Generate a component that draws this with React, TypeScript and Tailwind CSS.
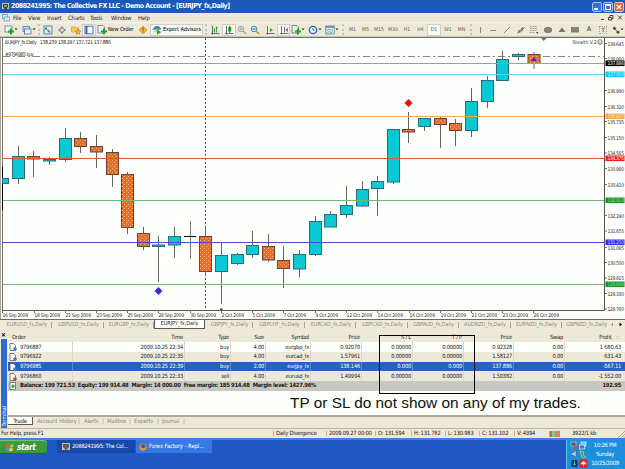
import type { ReactNode } from 'react';
import clsx from 'clsx';

type Candle = [x: number, open: number, close: number, high: number, low: number, up: boolean];

const candles: Candle[] = [
  [18.5, 156.5, 178.5, 146, 184, true],
  [33.5, 156.5, 159, 151, 177, false],
  [49.5, 159.5, 161, 157, 165, true],
  [65.5, 138.5, 159.5, 128, 162, true],
  [80.5, 138.5, 146.5, 132, 153, false],
  [96.5, 146.5, 152, 135, 168, false],
  [112.5, 152.5, 174.5, 149, 187, false],
  [127.5, 174.5, 227.5, 172, 234, false],
  [143.5, 233.5, 246.5, 227, 250, false],
  [158.5, 245, 246.5, 236, 282, true],
  [174.5, 236.5, 245, 227, 258, true],
  [205.5, 236.5, 271.5, 228, 276, false],
  [221.5, 255.5, 271.5, 243, 304, true],
  [237.5, 254.5, 263.5, 253, 265, true],
  [252.5, 245.5, 254.5, 231, 258, true],
  [268.5, 246.5, 260, 234, 262, false],
  [283.5, 260.5, 268.5, 246, 288, false],
  [299.5, 254.5, 269, 250, 277, true],
  [315.5, 221.5, 254.5, 216, 256, true],
  [330.5, 214.5, 227, 211, 227, true],
  [346.5, 205.5, 214.5, 186, 218, true],
  [362.5, 189.5, 206, 181, 207, true],
  [377.5, 181.5, 188.5, 176, 216, true],
  [393.5, 129.5, 182, 129, 184, true],
  [408.5, 129.5, 132, 112, 143, false],
  [424.5, 118.5, 126.5, 118, 131, true],
  [440.5, 118.5, 124.5, 116, 148, false],
  [455.5, 123.5, 130.5, 119, 146, false],
  [471.5, 101.5, 130.5, 88, 137, true],
  [487.5, 80.5, 101.5, 76, 108, true],
  [502.5, 59.5, 80.5, 51, 81, true],
  [518.5, 54.5, 56.5, 53, 60, true],
  [534, 54.5, 63.5, 52, 69, false],
];

const levels = [
  { y: 63.5, color: '#9a9da8', tag: '#000000', ink: '#ffffff', price: '137.886' },
  { y: 74.5, color: '#62d3f7', tag: '#10c8f8', ink: '#c8f4ff', price: '137.500' },
  { y: 116.5, color: '#f7ad54', tag: '#f8a848', ink: '#ffe2a8', price: '135.937' },
  { y: 158.5, color: '#e8582c', tag: '#f81818', ink: '#ffffff', price: '134.375' },
  { y: 200.5, color: '#72b872', tag: '#209030', ink: '#7fe07f', price: '132.813' },
  { y: 242.5, color: '#5444e4', tag: '#3030f0', ink: '#c8c8ff', price: '131.250' },
  { y: 284.5, color: '#72b872', tag: '#209030', ink: '#7fe07f', price: '129.688' },
];

const ticks: [number, string][] = [
  [43.5, '138.645'],
  [58.5, '138.060'],
  [90.5, '136.890'],
  [106.5, '136.320'],
  [121.5, '135.735'],
  [137.5, '135.150'],
  [153, '134.565'],
  [168.5, '133.980'],
  [184.5, '133.410'],
  [215.5, '132.240'],
  [231, '131.655'],
  [247.5, '131.085'],
  [262.5, '130.500'],
  [278, '129.915'],
  [293.5, '129.330'],
  [309, '128.760'],
];

const dates: [number, string][] = [
  [2, '16 Sep 2009'],
  [34, '18 Sep 2009'],
  [65, '21 Sep 2009'],
  [96, '23 Sep 2009'],
  [127, '25 Sep 2009'],
  [158, '28 Sep 2009'],
  [190, '30 Sep 2009'],
  [221, '2 Oct 2009'],
  [252, '5 Oct 2009'],
  [283, '7 Oct 2009'],
  [315, '9 Oct 2009'],
  [346, '12 Oct 2009'],
  [377, '14 Oct 2009'],
  [409, '16 Oct 2009'],
  [440, '19 Oct 2009'],
  [471, '21 Oct 2009'],
  [502, '23 Oct 2009'],
  [533, '26 Oct 2009'],
];

const Chart = () => (
  <svg className="block shrink-0" width="625" height="284" viewBox="0 36 625 284">
    <defs>
      <pattern id="bear" width="4" height="4" patternUnits="userSpaceOnUse">
        <rect width="4" height="4" fill="#e46e2e" />
        <rect x="0" y="0" width="1" height="1" fill="#f6b070" />
        <rect x="2" y="2" width="1" height="1" fill="#f6b070" />
      </pattern>
    </defs>
    <rect y="36" width="625" height="284" fill="#fcfffc" />
    <rect y="36" width="625" height="1" fill="#c9c5b6" />
    <rect y="37" width="625" height="1" fill="#77736a" />
    <rect y="38" width="1" height="282" fill="#aaa79b" />
    <path d="M2.5 38V310" stroke="#77706f" />
    <path d="M205.5 38V310" stroke="#5c5048" strokeDasharray="2 2" />
    <path d="M3 56.5H604" stroke="#8e8678" strokeDasharray="7 3 2 3" />
    {candles.map(([x, top, bottom, high, low, up]) => (
      <g key={x}>
        <path d={`M${x} ${high}V${low}`} stroke="#6e625c" />
        <rect
          x={x - 6}
          y={top}
          width="12"
          height={bottom - top}
          fill={up ? '#08c8d4' : 'url(#bear)'}
          stroke={up ? '#2a6c78' : '#754036'}
        />
      </g>
    ))}
    <path d="M2.5 167V210" stroke="#000" />
    <rect x="2.5" y="178.5" width="6" height="5" fill="#08c8d4" stroke="#2a6c78" />
    <path d="M190.5 221V259" stroke="#77706f" />
    <path d="M184 236.5H196" stroke="#000" />
    {levels.map((l) => (
      <path key={l.y} d={`M3 ${l.y}H604`} stroke={l.color} />
    ))}
    <path d="M531 61L534 57L537 61Z" fill="#3030f0" />
    <path d="M408.5 99L412.5 103L408.5 107L404.5 103Z" fill="#f80808" />
    <path d="M158.5 287L162.5 291L158.5 295L154.5 291Z" fill="#3030e8" />
    <path d="M541 38H546.5L543.7 41Z" fill="#5a72a0" />
    <rect x="220" y="308.5" width="2.5" height="2" fill="#303090" />
    <path d="M2 310.5H604.5V38" fill="none" stroke="#5e5450" />
    {dates.map(([x]) => (
      <path key={x} d={`M${x + 0.5} 310V313`} stroke="#77706f" />
    ))}
    <path d="M0 319.5H625" stroke="#6f6b60" />
    <g fontFamily="'DejaVu Sans Condensed', 'DejaVu Sans', sans-serif" fontSize="5" fill="#38302c">
      {dates.map(([x, label]) => (
        <text key={x} x={x + 0.5} y="317" textLength={label.length === 11 ? 25.5 : 22.5}>
          {label}
        </text>
      ))}
      {ticks.map(([y, label]) => (
        <g key={label}>
          <path d={`M605 ${y}H607`} stroke="#77706f" />
          <text x="607.5" y={y + 2} textLength="16.5">
            {label}
          </text>
        </g>
      ))}
      {levels.map((l) => (
        <g key={l.y}>
          <rect x="605.5" y={l.y - 3} width="19" height="5.6" fill={l.tag} />
          <text x="607.5" y={l.y + 1.6} textLength="16.5" fill={l.ink}>
            {l.price}
          </text>
        </g>
      ))}
      <text x="5" y="44" fontSize="5.3" textLength="106">
        EURJPY_fx,Daily&#160;&#160; 138.239 138.297 137.721 137.886
      </text>
      <text x="5" y="55.8" textLength="29">
        #9796985 buy
      </text>
      <text x="572.5" y="44.2" textLength="24">
        Stealth V.2
      </text>
    </g>
    <circle cx="600" cy="42" r="2.3" fill="none" stroke="#38302c" strokeWidth=".6" />
    <path d="M598.8 42.6Q600 44 601.2 42.6M599.2 41.3V41.8M600.8 41.3V41.8" fill="none" stroke="#38302c" strokeWidth=".5" />
  </svg>
);

const Svg = ({ children, w = 10 }: { children: ReactNode; w?: number }) => (
  <svg className="block shrink-0" width={w} height="10" viewBox={`0 0 ${w} 10`} fill="none">
    {children}
  </svg>
);

const Caret = () => (
  <svg className="block shrink-0" width="4" height="3" viewBox="0 0 4 3">
    <path d="M.5 .5H3.5L2 2.3Z" fill="#222" />
  </svg>
);

const Plus = () => <path d="M7 3.5V9.5M4 6.5H10" stroke="#18a828" strokeWidth="2.2" />;

const Axes = () => <path d="M2.5 1V9.5M1 8.5H9.5" stroke="#5c6068" strokeWidth=".9" />;

const Cell = ({ w, on, children }: { w: string; on?: boolean; children?: ReactNode }) => (
  <div
    className={clsx(
      'flex h-[12px] shrink-0 items-center justify-center whitespace-nowrap',
      w,
      on && 'bg-[#f8f7f1] outline-1 -outline-offset-1 outline-[#d2cebf]',
    )}
  >
    {children}
  </div>
);

const Grip = ({ w }: { w: string }) => (
  <Cell w={w}>
    <div className="h-[11px] border-l-2 border-dotted border-[#c8c4b4]" />
  </Cell>
);

const Toolbar = () => (
  <div className="flex h-[14px] shrink-0 items-center border-t border-[#f8f6ec] bg-[#ece9d8] pl-[2px]">
    <Cell w="w-[18px]">
      <Svg>
        <rect x="1" y="1" width="7" height="6" fill="#eef4f8" stroke="#6c7888" strokeWidth=".8" />
        <Plus />
      </Svg>
      <Caret />
    </Cell>
    <Cell w="w-[17px]">
      <Svg>
        <rect x="1" y="1.5" width="6.5" height="5" fill="#bcd8f4" stroke="#4878b8" strokeWidth=".8" />
        <rect x="2.5" y="4" width="6.5" height="5" fill="#e8f2fc" stroke="#4878b8" strokeWidth=".8" />
      </Svg>
      <Caret />
    </Cell>
    <Grip w="w-[4px]" />
    <Cell w="w-[14px]">
      <Svg>
        <rect x="1" y="1" width="8" height="8" fill="#d8ecfa" stroke="#3888b8" strokeWidth=".9" />
        <path d="M3 2V5M2 3.5H4" stroke="#18a828" />
        <path d="M4.5 5L7 7.5" stroke="#e05020" strokeWidth="1.6" />
      </Svg>
    </Cell>
    <Cell w="w-[14px]">
      <Svg>
        <circle cx="5" cy="5" r="2.3" stroke="#787878" />
        <path d="M5 1V3.5M5 6.5V9M1 5H3.5M6.5 5H9" stroke="#787878" />
      </Svg>
    </Cell>
    <Cell w="w-[13px]">
      <Svg>
        <path d="M.5 2H4L5 3H8V7H.5Z" fill="#f6cc58" stroke="#b89038" strokeWidth=".6" />
        <path d="M7 4L8 6H10L8.3 7.3L9 9.5L7 8.2L5 9.5L5.7 7.3L4 6H6Z" fill="#f8b020" stroke="#a87818" strokeWidth=".5" />
      </Svg>
    </Cell>
    <Cell w="w-[14px]" on>
      <Svg>
        <rect x="1" y="1.2" width="8" height="7.6" fill="#fff" stroke="#3870c0" />
        <path d="M2.5 1V9" stroke="#3870c0" strokeWidth="2" />
      </Svg>
    </Cell>
    <Cell w="w-[39px]">
      <Svg>
        <path d="M1 .5H6L7.5 2V8H1Z" fill="#f0f4f8" stroke="#687888" strokeWidth=".8" />
        <Plus />
      </Svg>
      <span className="ml-[1px] w-[26px] text-[5.6px] tracking-[-0.15px]">New Order</span>
    </Cell>
    <Cell w="w-[15px]">
      <Svg>
        <path d="M5 1L9 5L5 9L1 5Z" fill="#f8b828" stroke="#c88818" strokeWidth=".7" />
        <path d="M5 2.7V5.5M5 6.3V7.2" stroke="#704810" />
      </Svg>
    </Cell>
    <Cell w="w-[53px]" on>
      <Svg>
        <path d="M1 4Q2 1 5 1Q8 1 9 4L5 5Z" fill="#2890c8" />
        <path d="M0 4.5H9" stroke="#70b8d8" />
        <circle cx="4" cy="6" r="1.8" fill="#f0c840" />
        <path d="M5 4.5L9.5 7L5 9.7Z" fill="#20a838" />
      </Svg>
      <span className="ml-[1px] text-[5.6px] tracking-[-0.08px]">Expert Advisors</span>
    </Cell>
    <Grip w="w-[5px]" />
    <Cell w="w-[14px]">
      <Svg>
        <Axes />
        <path d="M4.5 3V7.5M6.5 1.5V7.5M6.5 3H8M3.5 6H4.5" stroke="#28a038" strokeWidth=".9" />
      </Svg>
    </Cell>
    <Cell w="w-[14px]" on>
      <Svg>
        <Axes />
        <rect x="4.2" y="2" width="3" height="4.5" fill="#18b030" />
        <path d="M5.7 .5V8" stroke="#107820" strokeWidth=".8" />
      </Svg>
    </Cell>
    <Cell w="w-[12px]">
      <Svg>
        <circle cx="4" cy="4" r="2.8" fill="#dcdcd0" stroke="#a8a89c" />
        <path d="M6 6L9 9" stroke="#a8a89c" strokeWidth="1.6" />
        <path d="M2.5 4H5.5M4 2.5V5.5" stroke="#98988c" strokeWidth=".8" />
      </Svg>
    </Cell>
    <Cell w="w-[14px]">
      <Svg>
        <circle cx="4" cy="4" r="2.8" fill="#d8ecfc" stroke="#3888d8" />
        <path d="M6 6L9 9" stroke="#d09828" strokeWidth="1.7" />
        <path d="M2.5 4H5.5" stroke="#2868b8" />
      </Svg>
    </Cell>
    <Cell w="w-[15px]">
      <Svg>
        <Axes />
        <path d="M5 3V7L8 5Z" fill="#28a038" />
      </Svg>
    </Cell>
    <Cell w="w-[13px]" on>
      <Svg>
        <Axes />
        <path d="M5.5 2V7.5" stroke="#687088" />
        <path d="M9 3V7L6.3 5Z" fill="#d04828" />
      </Svg>
    </Cell>
    <Cell w="w-[16px]">
      <Svg>
        <path d="M1 .5H6L7.5 2V8H1Z" fill="#e8ece8" stroke="#687068" strokeWidth=".8" />
        <Plus />
      </Svg>
      <Caret />
    </Cell>
    <Cell w="w-[17px]">
      <Svg>
        <circle cx="5" cy="5" r="3.6" fill="#f0f8ff" stroke="#2868c0" strokeWidth="1.4" />
        <path d="M5 3V5H7" stroke="#404858" strokeWidth=".8" />
      </Svg>
      <Caret />
    </Cell>
    <Cell w="w-[17px]">
      <Svg>
        <rect x=".8" y="1" width="8.4" height="8" fill="#e0eef4" stroke="#5880a8" strokeWidth=".8" />
        <path d="M1 2H9" stroke="#4080c8" strokeWidth="1.4" />
        <path d="M2 5L4 4L6 5.5L8 4M2 7.5L4 6.5L6 8L8 6.5" stroke="#489878" strokeWidth=".7" />
      </Svg>
      <Caret />
    </Cell>
    <Grip w="w-[6px]" />
    <div className="flex text-[5.2px] text-[#605c58]">
      <Cell w="w-[13px]">M1</Cell>
      <Cell w="w-[13px]">M5</Cell>
      <Cell w="w-[14px]">M15</Cell>
      <Cell w="w-[14px]">M30</Cell>
      <Cell w="w-[14px]">H1</Cell>
      <Cell w="w-[13px]">H4</Cell>
      <Cell w="w-[14px]" on>
        D1
      </Cell>
      <Cell w="w-[14px]">W1</Cell>
      <Cell w="w-[13px]">MN</Cell>
    </div>
    <Grip w="w-[5px]" />
    <Cell w="w-[13px]">
      <Svg>
        <path d="M5.5 2V8" stroke="#8c887c" />
      </Svg>
    </Cell>
    <Cell w="w-[14px]">
      <Svg>
        <path d="M2 5.5H8" stroke="#8c887c" />
      </Svg>
    </Cell>
    <Cell w="w-[14px]">
      <Svg>
        <path d="M2 8L8 2" stroke="#8c887c" />
      </Svg>
    </Cell>
    <Cell w="w-[13px]">
      <Svg>
        <path d="M1.5 8.5L6 3M4 7.5L8.5 2M3 5V8M6.5 2.5V5.5" stroke="#686460" />
      </Svg>
    </Cell>
    <Cell w="w-[14px]">
      <Svg>
        <path d="M1 1.5H8M1 3.5H8M1 5.5H8M1 7.5H6" stroke="#989488" strokeDasharray="1 .6" />
        <path d="M7 7H9.5L8.2 9Z" fill="#444" />
      </Svg>
    </Cell>
    <Cell w="w-[14px]">
      <Svg>
        <ellipse cx="5" cy="5" rx="3.8" ry="2.7" fill="#888478" stroke="#787468" strokeWidth=".8" />
      </Svg>
    </Cell>
    <Cell w="w-[13px]">
      <Svg>
        <path d="M5 2.5L8.5 7H1.5Z" fill="#787468" />
      </Svg>
    </Cell>
    <Cell w="w-[14px]">
      <Svg>
        <rect x="1.5" y="2.5" width="7" height="4.5" fill="#888478" stroke="#787468" strokeWidth=".8" />
      </Svg>
    </Cell>
    <Cell w="w-[14px]">
      <span className="text-[6.5px] font-bold text-[#787468]">A</span>
    </Cell>
    <Cell w="w-[14px]">
      <span className="flex h-[8px] w-[8px] items-center justify-center border border-dotted border-[#a8a498] text-[6px] font-bold text-[#787468]">
        T
      </span>
    </Cell>
    <Cell w="w-[15px]">
      <Svg w={8}>
        <path d="M.5 3.5L2.5 1.5L4.5 3.5L2.5 5ZM4 7L6 5.5L8 7L6 9Z" fill="#484440" />
        <path d="M2.5 4L6 7" stroke="#686460" />
      </Svg>
      <Caret />
    </Cell>
  </div>
);

const TitleBar = () => (
  <div className="flex h-[13px] shrink-0 items-center bg-[#1c58b8] pr-[1px] pl-[2px] text-white">
    <svg width="7" height="8" viewBox="0 0 7 8">
      <rect width="7" height="6" fill="#c8c0b0" />
      <path d="M1 1H6V4L3.5 7.5L1 4Z" fill="#484040" />
      <path d="M2 3H5" stroke="#e8e0d0" />
    </svg>
    <span className="ml-[2px] grow text-[6.9px] font-bold tracking-[-0.43px]">
      2088241995: The Collective FX LLC - Demo Account - [EURJPY_fx,Daily]
    </span>
    <div className="flex gap-[1px]">
      <div className="flex size-[10px] items-end rounded-[2px] border border-[#a8c4f4] bg-[#3a70e0] p-[1px]">
        <div className="h-[2px] w-[4px] bg-white" />
      </div>
      <div className="size-[10px] rounded-[2px] border border-[#a8c4f4] bg-[#3a70e0] p-[1px]">
        <div className="h-[6px] border border-t-2 border-white" />
      </div>
      <div className="flex size-[10px] items-center justify-center rounded-[2px] border border-[#f4c0b0] bg-[#e45c30]">
        <svg width="6" height="6" viewBox="0 0 6 6">
          <path d="M.7 .7L5.3 5.3M5.3 .7L.7 5.3" stroke="#fff" strokeWidth="1.4" />
        </svg>
      </div>
    </div>
  </div>
);

const MenuBar = () => (
  <div className="flex h-[9px] shrink-0 items-center bg-[#ece9d8] pr-[2px] pl-[2px] text-[6px] tracking-[-0.15px] text-[#28241c]">
    <svg width="8" height="8" viewBox="0 0 8 8" fill="#d8ecfc" stroke="#4898d8" strokeWidth=".7">
      <rect x=".5" y=".5" width="5" height="4" />
      <rect x="2" y="3" width="5.5" height="4" />
    </svg>
    <span className="ml-[3px] w-[15px]">File</span>
    <span className="w-[19px]">View</span>
    <span className="w-[21px]">Insert</span>
    <span className="w-[22px]">Charts</span>
    <span className="w-[21px]">Tools</span>
    <span className="w-[27px]">Window</span>
    <span className="grow">Help</span>
    <svg width="24" height="7" viewBox="0 0 24 7" fill="none" stroke="#484440">
      <path d="M2 5.5H5M9.5 3.5H12.5V6H9.5ZM11 3V1.5H14V4.5H13M19 1.5L23 5.5M23 1.5L19 5.5" />
    </svg>
  </div>
);

const chartTabs: [string, string][] = [
  ['EURUSD_fx,Daily', 'w-[52px]'],
  ['GBPUSD_fx,Daily', 'w-[51px]'],
  ['EURGBP_fx,Daily', 'w-[50px]'],
  ['EURJPY_fx,Daily', 'w-[51px]'],
  ['GBPJPY_fx,Daily', 'w-[49px]'],
  ['GBPCHF_fx,Daily', 'w-[51px]'],
  ['EURCAD_fx,Daily', 'w-[52px]'],
  ['GBPCAD_fx,Daily', 'w-[51px]'],
  ['GBPAUD_fx,Daily', 'w-[51px]'],
  ['AUDNZD_fx,Daily', 'w-[52px]'],
  ['EURNZD_fx,Daily', 'w-[51px]'],
  ['GBPNZD_fx,Daily', 'w-[49px]'],
];

const ChartTabs = () => (
  <div className="flex h-[12px] shrink-0 items-start bg-[#ece9d8] pl-[1px] text-[5.5px] tracking-[-0.08px] whitespace-nowrap text-[#918c80]">
    {chartTabs.map(([label, width], i) => {
      const active = label === 'EURJPY_fx,Daily';
      return (
        <div
          key={label}
          className={clsx(
            'flex h-[9px] shrink-0 items-center justify-center',
            width,
            active && 'border-r border-b border-l border-[#5c5850] bg-white text-[#201c18]',
          )}
        >
          {label}
          {!active && i < 11 && <span className="-mr-[5px] ml-[4px] h-[6px] border-l border-[#a8a498]" />}
        </div>
      );
    })}
    <div className="flex h-[9px] items-center">
      <svg width="12" height="5" viewBox="0 0 12 5">
        <path d="M2 .5V4.5L0 2.5Z" fill="#989488" />
        <path d="M8.5 .5V4.5L11 2.5Z" fill="#000" />
      </svg>
    </div>
  </div>
);

const columns = 'grid grid-cols-[65px_112px_46px_35px_45px_51px_51px_51px_50px_51px_60px]';
const head = ['Order', 'Time', 'Type', 'Size', 'Symbol', 'Price', 'S / L', 'T / P', 'Price', 'Swap', 'Profit'];
const orders = [
  ['9796887', '2009.10.25 22:34', 'buy', '4.00', 'eurgbp_fx', '0.92070', '0.00000', '0.00000', '0.92328', '0.00', '1 680.63'],
  ['9796922', '2009.10.25 22:35', 'buy', '4.00', 'eurcad_fx', '1.57961', '0.00000', '0.00000', '1.58127', '0.00', '631.43'],
  ['9796985', '2009.10.25 22:39', 'buy', '2.00', 'eurjpy_fx', '138.146', '0.000', '0.000', '137.886', '0.00', '-567.11'],
  ['9796860', '2009.10.25 22:33', 'sell', '4.00', 'eurusd_fx', '1.49994', '0.00000', '0.00000', '1.50382', '0.00', '-1 552.00'],
];

const DocIcon = ({ dot }: { dot: string }) => (
  <svg className="ml-[1px] shrink-0" width="8" height="8" viewBox="0 0 8 8">
    <path d="M1 .5H4.5L6.5 2.5V7.5H1Z" fill="#fff" stroke="#585858" strokeWidth=".8" />
    <circle cx="6" cy="6" r="1.8" fill={dot} />
  </svg>
);

const Terminal = () => (
  <div className="relative flex h-[96px] shrink-0 bg-[#ece9d8]">
    <div className="flex w-[8px] shrink-0 flex-col items-center pr-[1px]">
      <span className="h-[7px] text-[7px] leading-[6px] font-bold text-black">×</span>
      <div className="flex w-[6px] grow items-end justify-center overflow-hidden bg-[#2c6cd4] text-white">
        <span className="rotate-180 pt-[2px] text-[5.4px] leading-[6px] [writing-mode:vertical-rl]">Terminal</span>
      </div>
    </div>
    <div className="flex w-[617px] flex-col text-[5.7px] leading-none tracking-[-0.2px] text-[#1c1a18]">
      <div className={clsx(columns, 'h-[10px] items-center pt-[1px]')}>
        {head.map((h, i) => (
          <span
            key={i}
            className={clsx(i === 0 ? 'pl-[4px]' : 'pr-[2px] text-right', i === 10 && 'pr-[5px]!')}
          >
            {i === 10 ? <>Profit <span className="ml-[3px] text-[#a8a498]">⊂</span></> : h}
          </span>
        ))}
      </div>
      {orders.map((row, r) => (
        <div
          key={row[0]}
          className={clsx(
            columns,
            'h-[9.75px] items-stretch',
            r === 0 && 'bg-[#fcfffc]',
            r === 2 && 'bg-[#2462c4] text-white',
          )}
        >
          {row.map((v, i) => (
            <span
              key={i}
              className={clsx(
                'flex items-center pt-[1px]',
                i > 0 && 'justify-end pr-[1px]',
                i < 10 ? 'border-r' : 'pr-[4px]!',
                r === 2 ? 'border-[#5888d8]' : 'border-[#dcd8c8]',
              )}
            >
              {i === 0 && <DocIcon dot={r === 3 ? '#e03020' : '#3080d0'} />}
              <span className={i === 0 ? 'ml-[3px]' : undefined}>{v}</span>
            </span>
          ))}
        </div>
      ))}
      <div className="flex h-[10px] items-center bg-[#c8c8c2] pr-[4px] text-[5.8px] font-bold tracking-[-0.27px]">
        <svg className="ml-[1px]" width="8" height="8" viewBox="0 0 8 8">
          <rect x="1" y=".5" width="5.5" height="7" fill="#fff" stroke="#686868" strokeWidth=".8" />
          <circle cx="4" cy="4.2" r="1.7" fill="#28b040" />
        </svg>
        <span className="ml-[3px] grow whitespace-pre">
          Balance: 199 721.53{'  '}Equity: 199 914.48{'  '}Margin: 14 000.00{'  '}Free margin: 185 914.48{'  '}Margin level: 1427.96%
        </span>
        <span>192.95</span>
      </div>
      <div className="h-[24px] bg-[#fcfffc]" />
      <div className="flex grow items-start border-t-2 border-[#aaa89e] text-[6px] text-[#8c887c]">
        <span className="flex h-[8px] w-[25px] items-center justify-center border-r border-b border-[#5c5850] bg-[#fcfffc] text-[#1c1a18]">
          Trade
        </span>
        <span className="mt-[1px] ml-[4px] w-[41px]">Account History</span>
        <span className="mt-[1px] w-[6px]">|</span>
        <span className="mt-[1px] w-[18px]">Alerts</span>
        <span className="mt-[1px] w-[5px]">|</span>
        <span className="mt-[1px] w-[22px]">Mailbox</span>
        <span className="mt-[1px] w-[5px]">|</span>
        <span className="mt-[1px] w-[23px]">Experts</span>
        <span className="mt-[1px] w-[5px]">|</span>
        <span className="mt-[1px] w-[21px]">Journal</span>
        <span className="mt-[1px]">|</span>
      </div>
    </div>
    {/* annotation over the order list */}
    <div className="absolute top-[3px] left-[379px] h-[59px] w-[96px] border border-black" />
    <p className="absolute top-[61px] left-[290px] font-['Liberation_Sans',sans-serif] text-[15.4px] leading-[20px] whitespace-nowrap text-[#101010]">
      TP or SL do not show on any of my trades.
    </p>
  </div>
);

const StatusBar = () => (
  <div className="flex h-[10px] shrink-0 items-center border-t border-[#b8b4a4] bg-[#ece9d8] text-[5.8px] tracking-[-0.24px] whitespace-nowrap text-[#1c1a18]">
    <span className="w-[273px] pl-[1px]">For Help, press F1</span>
    <span className="w-[53px] border-l border-[#b8b4a4] pl-[2px]">Daily Divergence</span>
    <span className="w-[49px] border-l border-[#b8b4a4] pl-[2px]">2009.09.27 00:00</span>
    <span className="w-[36px] border-l border-[#b8b4a4] pl-[2px]">O: 131.594</span>
    <span className="w-[34px] border-l border-[#b8b4a4] pl-[2px]">H: 131.782</span>
    <span className="w-[34px] border-l border-[#b8b4a4] pl-[2px]">L: 130.983</span>
    <span className="w-[35px] border-l border-[#b8b4a4] pl-[2px]">C: 131.102</span>
    <span className="w-[31px] border-l border-[#b8b4a4] pl-[2px]">V: 4394</span>
    <svg className="ml-[4px]" width="11" height="6" viewBox="0 0 11 6">
      <path d="M1 0V6M3 0V6M5 0V6" stroke="#389838" />
      <path d="M2 0V6M7 0V6M9 0V6M11 0V6" stroke="#c04030" strokeWidth="1.2" />
    </svg>
    <span className="ml-[12px] grow">3922/1 kb</span>
    <svg width="8" height="8" viewBox="0 0 8 8">
      <path d="M1 8L8 1M4 8L8 4M6.5 8L8 6.5" stroke="#a8a498" />
    </svg>
  </div>
);

const Taskbar = () => (
  <div className="flex h-[31px] shrink-0 items-start border-t-2 border-[#3c80ec] bg-[#2058c4] text-white">
    <div className="flex h-[14px] w-[47px] items-center rounded-r-[4px] bg-[#3c9840] pl-[5px] shadow-[inset_0_1px_1px_#78c878,inset_0_-1px_1px_#206828]">
      <svg width="10" height="9" viewBox="0 0 10 9">
        <path d="M1.5 1Q3 .2 4.6 1L4 4Q2.5 3.3 1 4Z" fill="#f05828" />
        <path d="M5.4 1.2Q7 2 9 1.2L8.3 4.3Q6.5 5 4.8 4.2Z" fill="#88d038" />
        <path d="M.9 4.7Q2.5 4 3.9 4.8L3.2 7.8Q1.7 7 .2 7.8Z" fill="#4890f0" />
        <path d="M4.6 5Q6.3 5.8 8.1 5L7.4 8Q5.6 8.8 3.9 8Z" fill="#f8d038" />
      </svg>
      <span className="ml-[2px] text-[8.2px] leading-none font-bold tracking-[-0.3px] italic">start</span>
    </div>
    <div className="ml-[10px] flex h-[13px] w-[78px] items-center bg-[#1a48a8] pl-[5px] text-[5.9px] whitespace-nowrap">
      <svg width="8" height="8" viewBox="0 0 8 8">
        <rect width="8" height="7" fill="#c8c0b0" />
        <path d="M1 1H7V4L4 7.5L1 4Z" fill="#686058" />
      </svg>
      <span className="ml-[2px] tracking-[-0.3px]">2088241995: The Col...</span>
    </div>
    <div className="ml-[1px] flex h-[13px] w-[76px] items-center bg-[#3878e4] pl-[3px] text-[5.9px] whitespace-nowrap">
      <svg width="8" height="8" viewBox="0 0 8 8">
        <circle cx="4" cy="4" r="3.6" fill="#e87828" />
        <circle cx="4.3" cy="3.2" r="2" fill="#3858a8" />
        <path d="M.5 2L2 4.5Q4 6 6 4.5L7.5 3V6L4 8L1 6Z" fill="#f09030" />
      </svg>
      <span className="ml-[2px] tracking-[-0.1px]">Forex Factory - Repl...</span>
    </div>
    <div className="ml-auto flex h-[29px] w-[59px] border-l border-[#60c8f0] bg-[#1c90dc] pt-[1px] pl-[3px]">
      <svg className="shrink-0" width="18" height="27" viewBox="0 0 18 27">
        <rect x="1" y="1" width="5" height="4" fill="#485878" stroke="#c8d0e0" strokeWidth=".7" />
        <path d="M4 4L8 8M8 4L4 8" stroke="#e04030" strokeWidth="1.2" />
        <rect x="11" y="1" width="5" height="4" fill="#78b8f0" stroke="#e0f0ff" strokeWidth=".7" />
        <rect x="9.5" y="4" width="5" height="4" fill="#3878c8" stroke="#e0f0ff" strokeWidth=".7" />
        <path d="M1 12H3L6 9.5V16.5L3 14H1Z" fill="#d0ccc0" stroke="#505050" strokeWidth=".5" />
        <path d="M10 10L14 11L13 14L16 16L12 17Z" fill="#38a848" stroke="#e0e8c0" strokeWidth=".5" />
        <rect x="1.5" y="19" width="6" height="7" rx="1" fill="#102878" />
        <path d="M4.5 20V24M3 22.5L4.5 24.5L6 22.5" stroke="#48d058" fill="none" />
        <rect x="9.5" y="18.5" width="8" height="8" fill="#e02020" />
        <path d="M11 23Q13.5 18 16 23ZM13.5 23V25.5" fill="#fff" stroke="#fff" strokeWidth=".6" />
      </svg>
      <div className="flex grow flex-col items-center justify-around pr-[3px] text-[5.8px] leading-none tracking-[-0.25px] whitespace-nowrap">
        <span>10:26 PM</span>
        <span>Sunday</span>
        <span>10/25/2009</span>
      </div>
    </div>
  </div>
);

const App = () => (
  <div className="flex h-[469px] w-[625px] flex-col overflow-hidden bg-[#ece9d8] font-['DejaVu_Sans_Condensed','DejaVu_Sans',sans-serif] leading-none">
    <TitleBar />
    <MenuBar />
    <Toolbar />
    <Chart />
    <ChartTabs />
    <Terminal />
    <StatusBar />
    <Taskbar />
  </div>
);

export default App;
